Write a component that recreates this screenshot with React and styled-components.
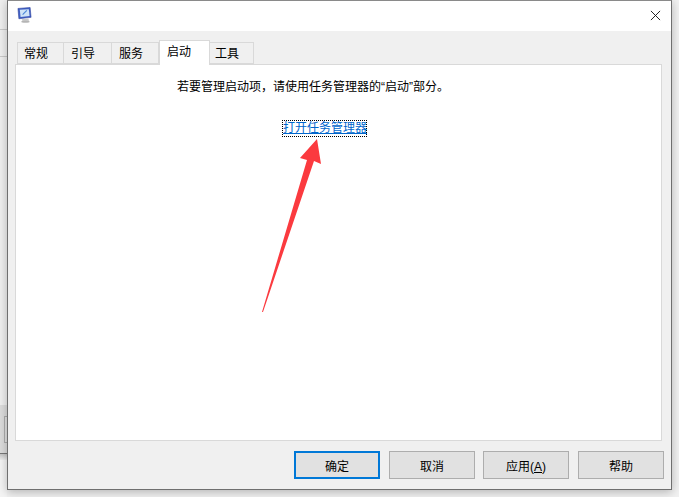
import React from "react";
import styled, {createGlobalStyle} from "styled-components";

const tabs = [
  {label: "常规", width: 47, pad: 6},
  {label: "引导", width: 48, pad: 7},
  {label: "服务", width: 47, pad: 7},
  {label: "启动", width: 51, pad: 7, active: true},
  {label: "工具", width: 44, pad: 5},
];
const buttons = ["确定", "取消", "应用", "帮助"];

export default function App() {
  return (
    <Screen>
      <GlobalStyle />
      <LeftStrip>
        <StripRow $h={29} />
        <StripRow $h={27} $line />
        <StripRow $h={349} $line />
        <DarkRow>
          <StripButton />
        </DarkRow>
        <ShadowBand />
        <StripRow $h={37} $white />
      </LeftStrip>
      <Window>
        <TitleBar>
          <AppIcon viewBox="0 0 16 17">
            <path d="M1 1.5 L14 0.5 L15 11 L2 12.5 Z" fill="#3f5fc4" stroke="#2b3f9a" strokeWidth="0.6" />
            <path d="M3 3 L12.6 2.3 L13.4 9.6 L3.8 10.6 Z" fill="#cfe4f7" />
            <path d="M6 8 L10.5 3.5" stroke="#4a86d8" strokeWidth="1.2" />
            <path d="M5 13 L12 12.2 L13 14.5 L6 15.5 Z" fill="#c9c9c9" />
            <ellipse cx="9" cy="15.6" rx="4.5" ry="1.1" fill="#b5b5b5" />
          </AppIcon>
          <CloseIcon viewBox="0 0 12 12">
            <path d="M1 1 L11 11 M11 1 L1 11" stroke="#111" strokeWidth="1" fill="none" />
          </CloseIcon>
        </TitleBar>
        <Body>
          <TabRow>
            {tabs.map((t) => (
              <Tab key={t.label} $w={t.width} $pad={t.pad} $active={t.active}>
                {t.label}
              </Tab>
            ))}
          </TabRow>
          <Panel>
            <Hint>若要管理启动项，请使用任务管理器的“启动”部分。</Hint>
            <ManagerLink>打开任务管理器</ManagerLink>
            <Arrow viewBox="0 0 70 180">
              <polygon points="55,1 59,26 52,23 1,174 0,174 45,22 38,20" fill="#fb3a3f" />
            </Arrow>
          </Panel>
          <Footer>
            {buttons.map((b, i) => (
              <DialogButton key={b} $primary={i === 0}>
                {b}
                {b === "应用" && (
                  <>
                    (<u>A</u>)
                  </>
                )}
              </DialogButton>
            ))}
          </Footer>
        </Body>
      </Window>
    </Screen>
  );
}

const GlobalStyle = createGlobalStyle`
  html, body {
    margin: 0;
    padding: 0;
    background: #f1f1f1;
    overflow: hidden;
  }
  * {
    box-sizing: border-box;
  }
`;

const Screen = styled.div`
  width: 679px;
  height: 497px;
  display: flex;
  align-items: flex-start;
  background: #f1f1f1;
  font-family: "Liberation Sans", "Noto Sans CJK SC", sans-serif;
  font-size: 12px;
  color: #000;
  overflow: hidden;
`;

const LeftStrip = styled.div`
  width: 7px;
  flex: none;
  display: flex;
  flex-direction: column;
`;

const StripRow = styled.div`
  height: ${(p) => p.$h}px;
  background: ${(p) => (p.$white ? "#f4f4f4" : "#efefef")};
  border-top: ${(p) => (p.$line ? "1px solid #c9c9c9" : "none")};
`;

const DarkRow = styled.div`
  height: 49px;
  background: #dcdcdc;
  border-bottom: 1px solid #777;
  padding: 11px 0 0 4px;
`;

const ShadowBand = styled.div`
  height: 6px;
  background: linear-gradient(#c4c4c4, #eeeeee);
`;

const StripButton = styled.div`
  width: 3px;
  height: 27px;
  background: #e1e1e1;
  border: 1px solid #adadad;
  border-right: none;
`;

const Window = styled.div`
  width: 665px;
  height: 490px;
  flex: none;
  position: relative;
  z-index: 1;
  display: flex;
  flex-direction: column;
  border: 1px solid #6f6f6f;
  border-top-color: #8a8a8a;
  box-shadow: 0 2px 9px rgba(0, 0, 0, 0.26);
`;

const TitleBar = styled.div`
  height: 30px;
  flex: none;
  background: #fff;
  display: flex;
  align-items: center;
  justify-content: space-between;
  padding: 0 10px 2px 9px;
`;

const AppIcon = styled.svg`
  width: 15px;
  height: 16px;
`;

const CloseIcon = styled.svg`
  width: 11px;
  height: 11px;
`;

const Body = styled.div`
  flex: 1;
  background: #f0f0f0;
  padding: 9px 7px 0 7px;
  display: flex;
  flex-direction: column;
`;

const TabRow = styled.div`
  height: 24px;
  flex: none;
  display: flex;
  align-items: flex-end;
  position: relative;
  z-index: 1;
  padding-left: 2px;
`;

const Tab = styled.div`
  width: ${(p) => p.$w}px;
  height: ${(p) => (p.$active ? 25 : 22)}px;
  margin-bottom: ${(p) => (p.$active ? -1 : 0)}px;
  background: ${(p) => (p.$active ? "#fff" : "#f0f0f0")};
  border: 1px solid #d9d9d9;
  border-bottom: ${(p) => (p.$active ? "none" : "1px solid #d9d9d9")};
  border-left: ${(p) => (p.$active ? "1px solid #d9d9d9" : "none")};
  &:first-child {
    border-left: 1px solid #d9d9d9;
  }
  padding: 3px 0 0 ${(p) => p.$pad}px;
  line-height: 16px;
`;

const Panel = styled.div`
  width: 647px;
  height: 377px;
  flex: none;
  position: relative;
  background: #fff;
  border: 1px solid #d9d9d9;
  display: flex;
  flex-direction: column;
  align-items: flex-start;
`;

const Hint = styled.div`
  margin: 14px 0 0 161px;
  line-height: 16px;
  height: 16px;
`;

const ManagerLink = styled.a`
  margin: 26px 0 0 267px;
  height: 15px;
  width: 83px;
  line-height: 14px;
  white-space: nowrap;
  color: #0066cc;
  text-decoration: underline;
  outline: 1px dotted #000;
  outline-offset: 0;
  cursor: pointer;
`;

const Arrow = styled.svg`
  position: absolute;
  left: 246px;
  top: 73px;
  width: 70px;
  height: 180px;
`;

const Footer = styled.div`
  display: flex;
  gap: 9px;
  margin-top: 10px;
  padding-left: 279px;
`;

const DialogButton = styled.button`
  width: 86px;
  height: 28px;
  padding: 0;
  font: inherit;
  color: #000;
  background: #e1e1e1;
  border: ${(p) => (p.$primary ? "2px solid #0078d7" : "1px solid #adadad")};
  border-radius: 0;
  &:nth-child(3) {
    margin-left: -1px;
  }
`;
